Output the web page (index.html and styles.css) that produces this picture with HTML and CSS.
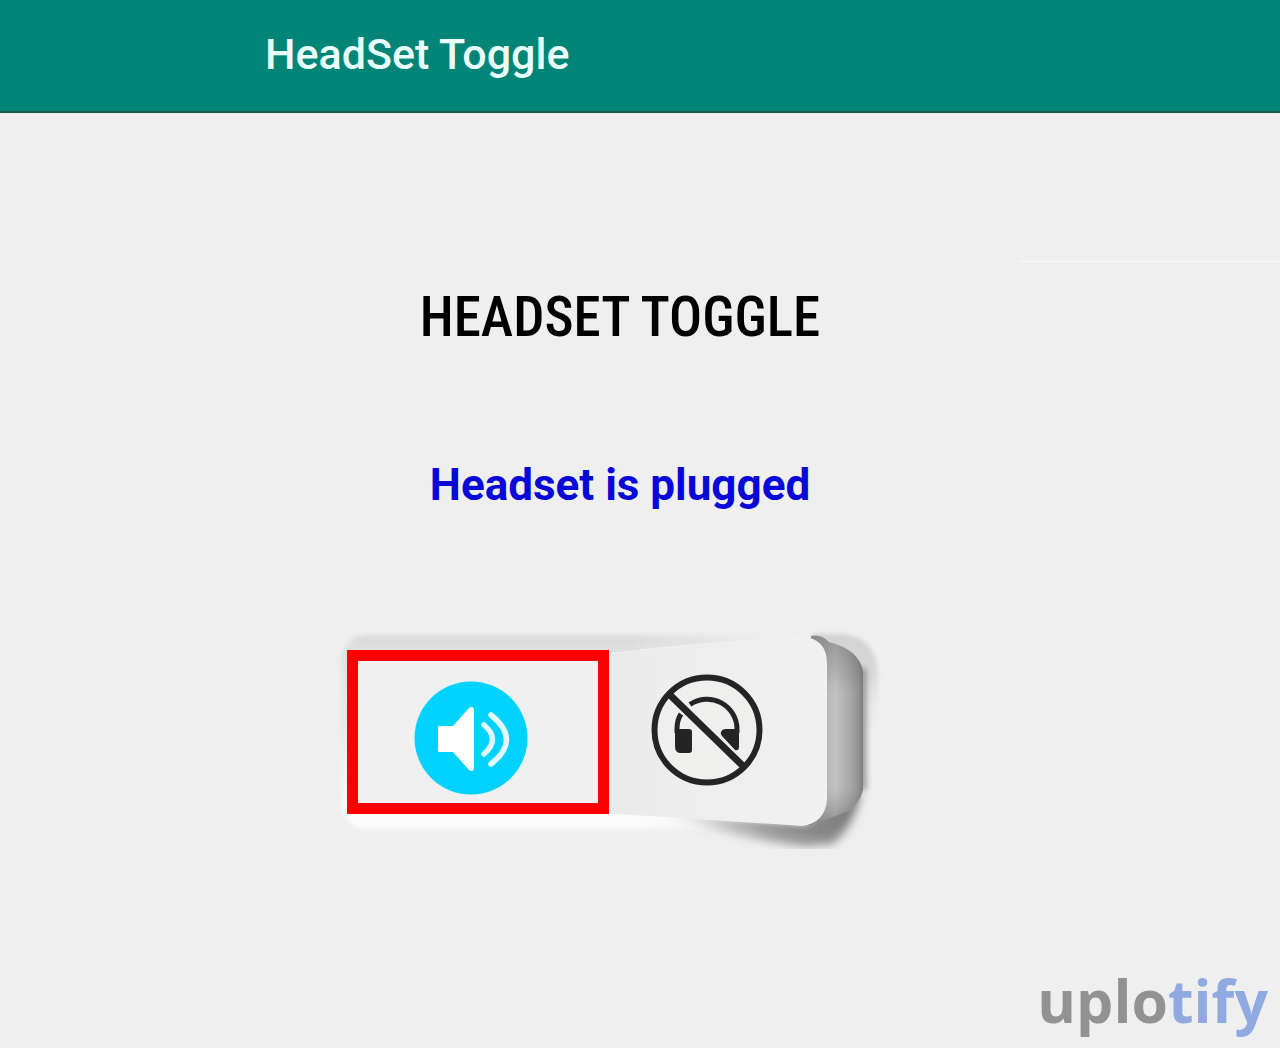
FILE: index.html
```html
<!DOCTYPE html>
<html lang="en">
<head>
  <meta charset="utf-8">
  <meta name="viewport" content="width=device-width, initial-scale=1">
  <title>HeadSet Toggle</title>
  <link rel="stylesheet" href="styles.css">
</head>
<body class="page">
  <header class="app-bar">
    <p class="app-title">HeadSet Toggle</p>
  </header>
  <div class="divider"></div>
  <main class="content">
    <h1 class="heading">HEADSET TOGGLE</h1>
    <p class="status" role="status">Headset is plugged</p>
    <div class="switch" role="group" aria-label="Audio output">
      <svg class="switch-art" viewBox="340 620 560 230" aria-hidden="true">
        <defs>
          <filter id="soft" x="-20%" y="-20%" width="140%" height="140%"><feGaussianBlur stdDeviation="2"/></filter>
          <filter id="edge" filterUnits="userSpaceOnUse" x="840" y="630" width="50" height="200"><feGaussianBlur stdDeviation="3"/></filter>
          <filter id="softer" x="-20%" y="-40%" width="140%" height="180%"><feGaussianBlur stdDeviation="5"/></filter>
          <linearGradient id="side" x1="0" x2="1" y1="0" y2="0">
            <stop offset="0" stop-color="#b2b2b2"/>
            <stop offset="0.3" stop-color="#b6b6b6"/>
            <stop offset="0.5" stop-color="#c2c2c2"/>
            <stop offset="0.75" stop-color="#a9a9a9"/>
            <stop offset="0.92" stop-color="#929292"/>
            <stop offset="1" stop-color="#7c7c7c"/>
          </linearGradient>
          <linearGradient id="sideshade" x1="0" x2="0" y1="0" y2="1">
            <stop offset="0" stop-color="#555" stop-opacity="0.4"/>
            <stop offset="0.3" stop-color="#555" stop-opacity="0"/>
            <stop offset="0.8" stop-color="#555" stop-opacity="0"/>
            <stop offset="1" stop-color="#444" stop-opacity="0.4"/>
          </linearGradient>
          <linearGradient id="rim" x1="0" x2="0" y1="0" y2="1">
            <stop offset="0" stop-color="#dadada"/>
            <stop offset="0.12" stop-color="#e2e2e2"/>
            <stop offset="0.45" stop-color="#e8e8e8"/>
            <stop offset="0.8" stop-color="#f8f8f8"/>
            <stop offset="1" stop-color="#fcfcfc"/>
          </linearGradient>
          <linearGradient id="halo" x1="0" x2="0" y1="0" y2="1">
            <stop offset="0" stop-color="#d2d2d2"/>
            <stop offset="0.3" stop-color="#d8d8d8"/>
            <stop offset="0.8" stop-color="#e8e8e8" stop-opacity="0"/>
          </linearGradient>
          <linearGradient id="shadow" x1="0" x2="1" y1="0" y2="0">
            <stop offset="0" stop-color="#777" stop-opacity="0"/>
            <stop offset="0.6" stop-color="#777" stop-opacity="0.7"/>
            <stop offset="1" stop-color="#777" stop-opacity="0.9"/>
          </linearGradient>
          <linearGradient id="face" x1="0" x2="1" y1="0" y2="0">
            <stop offset="0" stop-color="#e9e9e9"/>
            <stop offset="0.3" stop-color="#ededed"/>
            <stop offset="1" stop-color="#f1f1f1"/>
          </linearGradient>
          <linearGradient id="fade" x1="0" x2="1" y1="0" y2="0">
            <stop offset="0.52" stop-color="#fff"/>
            <stop offset="0.76" stop-color="#000"/>
          </linearGradient>
          <mask id="rimmask"><rect x="320" y="600" width="600" height="260" fill="url(#fade)"/></mask>
          <clipPath id="base"><rect x="320" y="600" width="600" height="249"/></clipPath>
        </defs>
        <g mask="url(#rimmask)">
          <rect x="341" y="635" width="520" height="194" rx="26" fill="url(#rim)" filter="url(#soft)"/>
        </g>
        <path d="M812 634h32q34 5 34 42v80h-30z" fill="url(#halo)" filter="url(#soft)"/>
        <path d="M863 668v122" stroke="#888" stroke-width="6" filter="url(#edge)"/>
        <g clip-path="url(#base)">
          <path d="M665 814L806 824L852 790L861 796Q852 830 832 844L806 846Q740 840 665 814Z" fill="url(#shadow)" filter="url(#softer)"/>
          <path d="M690 818L806 828L855 802Q846 828 826 834Q770 834 690 818Z" fill="url(#shadow)" opacity="0.5" filter="url(#soft)"/>
        </g>
        <path d="M811 636Q821 634 829 642Q860 650 863 672V790Q860 803 848 811L808 826Z" fill="url(#side)"/>
        <path d="M811 636Q821 634 829 642Q860 650 863 672V790Q860 803 848 811L808 826Z" fill="url(#sideshade)"/>
        <path d="M600 654Q700 643 802 637Q827 638 827 664V800Q825 823 802 826Q700 819 600 813Z" fill="url(#face)"/>
        <path d="M608 654Q700 642 800 638" fill="none" stroke="#f2f2f2" stroke-width="1"/>
      </svg>
      <button class="option option-selected" type="button" aria-label="Speaker" aria-pressed="true">
        <svg class="icon-speaker" viewBox="0 0 114 114" aria-hidden="true">
          <circle cx="57" cy="57" r="56.500" fill="#00d2fe"/>
          <path d="M25 45h14l16-18q5-3 5 3v56q0 6-5 3L39 71H25q-1 0-1-2V47q0-2 1-2z" fill="#fff"/>
          <path d="M70 44q17 14 0 29M77 34q31 25 0 49" fill="none" stroke="#e2faff" stroke-width="5.500" stroke-linecap="round"/>
        </svg>
      </button>
      <button class="option" type="button" aria-label="No headset" aria-pressed="false">
        <svg class="icon-headset" viewBox="0 0 112 112" aria-hidden="true">
          <circle cx="56" cy="56" r="52.500" fill="#efefee" stroke="#242424" stroke-width="6"/>
          <path d="M26 59V55Q26 46 30 40M39 30.500A30 30 0 0 1 86 55V59" fill="none" stroke="#242424" stroke-width="5"/>
          <path d="M24 55h14q3 0 3 3v18q0 3-3 3H29q-5 0-5-7zM70 58q1-3 5-3h13v18q0 4-4 3L71 62q-2-2-1-4z" fill="#242424"/>
          <path d="M19 21L92 92" stroke="#242424" stroke-width="7"/>
        </svg>
      </button>
    </div>
  </main>
  <footer class="footer">
    <span class="brand">uplo<span class="brand-accent">tify</span></span>
  </footer>
</body>
</html>
```
FILE: styles.css
```css
* {
  box-sizing: border-box;
}

.page {
  display: flex;
  flex-direction: column;
  min-height: 100vh;
  margin: 0;
  background: #efefef;
  font-family: Roboto, "Liberation Sans", sans-serif;
}

.app-bar {
  padding: 24px 265px 27px;
  background: #028576;
  border-bottom: 2px solid #17594a;
}

.app-title {
  margin: 0;
  color: #e9fffc;
  font-size: 43px;
  font-weight: 500;
  line-height: 60px;
}

.divider {
  align-self: flex-end;
  width: 260px;
  margin-top: 148px;
  border-top: 1px solid #fafafa;
}

.content {
  display: flex;
  flex-direction: column;
  align-items: center;
  padding: 19px 40px 0 0;
}

.heading {
  margin: 0;
  color: #000;
  font-family: "Roboto Condensed", "Liberation Sans Narrow", "Noto Sans", sans-serif;
  font-size: 55px;
  font-weight: 500;
  line-height: 72px;
}

.status {
  margin: 96px 0 0;
  color: #0808d8;
  font-size: 44px;
  font-weight: 700;
  line-height: 72px;
}

.switch {
  position: relative;
  display: flex;
  width: 560px;
  height: 230px;
  margin-top: 99px;
  padding: 30px 7px 0;
}

.switch-art {
  position: absolute;
  inset: 0;
  width: 100%;
  height: 100%;
  overflow: visible;
}

.option {
  position: relative;
  display: flex;
  align-items: center;
  justify-content: center;
  width: 196px;
  height: 164px;
  padding: 0 0 4px;
  border: 0;
  background: transparent;
}

.option-selected {
  width: 262px;
  padding: 12px 14px 0 0;
  border: 11px solid #fe0000;
  background: #f0f0f0;
}

.icon-speaker {
  width: 114px;
  height: 114px;
}

.icon-headset {
  width: 112px;
  height: 112px;
}

.footer {
  display: flex;
  justify-content: flex-end;
  margin-top: auto;
  padding: 0 12px 12px;
}

.brand {
  color: #929292;
  font-family: "Open Sans", "Noto Sans", sans-serif;
  font-size: 59px;
  font-weight: 700;
  line-height: 72px;
}

.brand-accent {
  color: #90aae1;
}
```
